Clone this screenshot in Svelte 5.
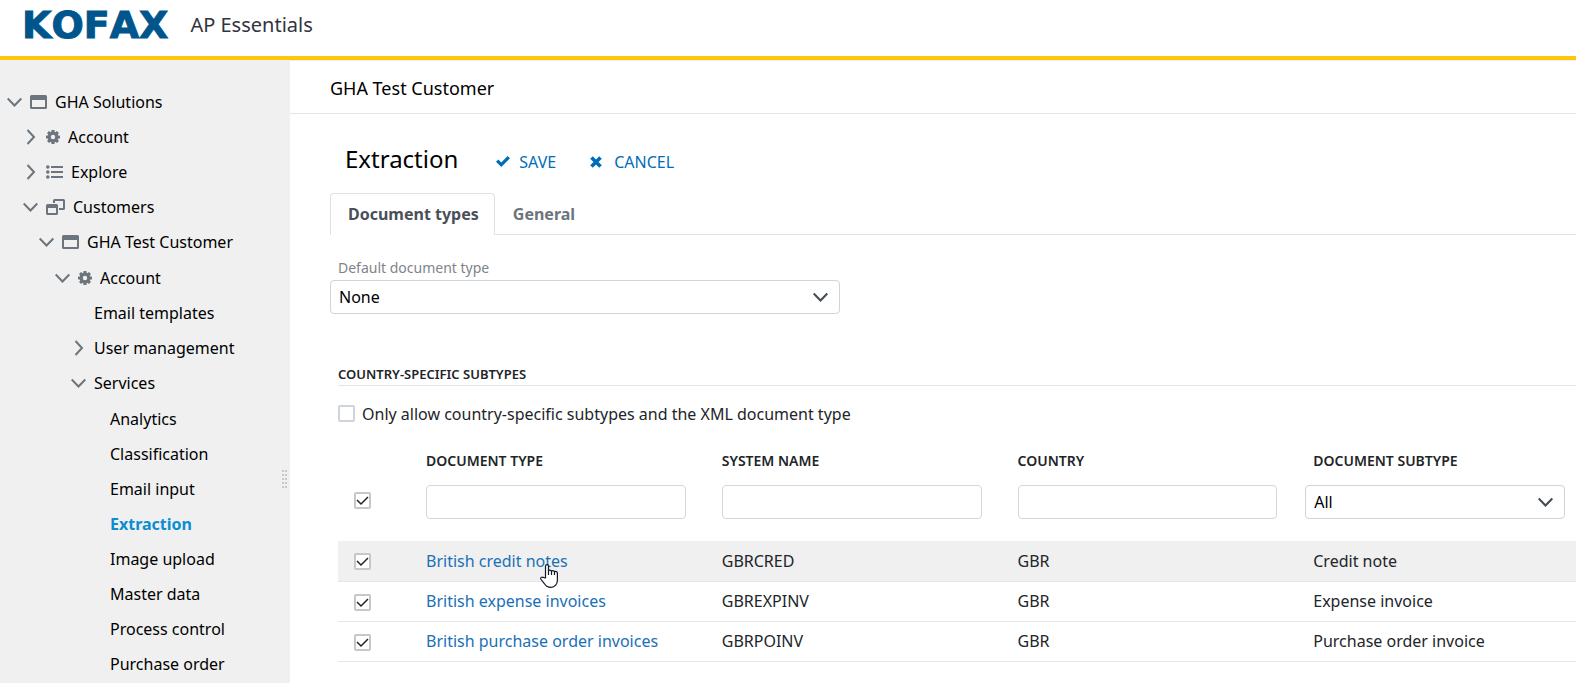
<script>
  const tree = [
    {
      label: 'GHA Solutions', icon: 'window', open: true, children: [
        { label: 'Account', icon: 'gear', open: false },
        { label: 'Explore', icon: 'list', open: false },
        {
          label: 'Customers', icon: 'windows', open: true, children: [
            {
              label: 'GHA Test Customer', icon: 'window', open: true, children: [
                {
                  label: 'Account', icon: 'gear', open: true, children: [
                    { label: 'Email templates' },
                    { label: 'User management', open: false },
                    {
                      label: 'Services', open: true, children: [
                        { label: 'Analytics' },
                        { label: 'Classification' },
                        { label: 'Email input' },
                        { label: 'Extraction', current: true },
                        { label: 'Image upload' },
                        { label: 'Master data' },
                        { label: 'Process control' },
                        { label: 'Purchase order' }
                      ]
                    }
                  ]
                }
              ]
            }
          ]
        }
      ]
    }
  ];

  const rows = $state([
    { type: 'British credit notes', name: 'GBRCRED', country: 'GBR', subtype: 'Credit note', checked: true, active: true },
    { type: 'British expense invoices', name: 'GBREXPINV', country: 'GBR', subtype: 'Expense invoice', checked: true },
    { type: 'British purchase order invoices', name: 'GBRPOINV', country: 'GBR', subtype: 'Purchase order invoice', checked: true }
  ]);
</script>

{#snippet icon(name)}
  {#if name === 'window'}
    <svg width="17" height="15" viewBox="0 0 17 15" aria-hidden="true">
      <path fill="currentColor" fill-rule="evenodd" d="M1.500 0h14A1.500 1.500 0 0 1 17 1.500v11a1.500 1.500 0 0 1-1.500 1.500h-14A1.500 1.500 0 0 1 0 12.500v-11A1.500 1.500 0 0 1 1.500 0zM2 5v7h13V5z" />
    </svg>
  {:else if name === 'gear'}
    <svg width="14" height="15" viewBox="0 0 14 15" aria-hidden="true">
      <g fill="currentColor">
        {#each [0, 45, 90, 135, 180, 225, 270, 315] as angle}
          <rect x="5.400" y="0" width="3.200" height="3.500" rx="0.600" transform="rotate({angle} 7 7)" />
        {/each}
      </g>
      <circle cx="7" cy="7" r="3.800" fill="none" stroke="currentColor" stroke-width="3.200" />
    </svg>
  {:else if name === 'list'}
    <svg width="17" height="15" viewBox="0 0 17 15" aria-hidden="true">
      <g fill="currentColor">
        <circle cx="1.800" cy="2" r="1.800" /><circle cx="1.800" cy="7" r="1.800" /><circle cx="1.800" cy="12" r="1.800" />
        <rect x="5" y="1" width="12" height="2" /><rect x="5" y="6" width="12" height="2" /><rect x="5" y="11" width="12" height="2" />
      </g>
    </svg>
  {:else}
    <svg width="19" height="17" viewBox="0 0 19 17" aria-hidden="true">
      <path fill="currentColor" fill-rule="evenodd" d="M8.500 0h9A1.500 1.500 0 0 1 19 1.500v8a1.500 1.500 0 0 1-1.500 1.500H13V9h4V2H9v2H7V1.500A1.500 1.500 0 0 1 8.500 0zM1.500 5h9A1.500 1.500 0 0 1 12 6.500v8a1.500 1.500 0 0 1-1.500 1.500h-9A1.500 1.500 0 0 1 0 14.500v-8A1.500 1.500 0 0 1 1.500 5zM2 9v5h8V9z" />
    </svg>
  {/if}
{/snippet}

{#snippet chevron(open)}
  <svg width="16" height="16" viewBox="0 0 16 16" aria-hidden="true">
    <path fill="none" stroke="currentColor" stroke-width="2" d={open ? 'M0.700 4.500l6.800 7 6.800-7' : 'M4.500 1l6.500 7-6.500 7'} />
  </svg>
{/snippet}

{#snippet branch(items, depth)}
  <ul class:spaced={depth === 3 || depth === 5}>
    {#each items as item}
      <li>
        <div class="node">
          <span class="toggle">{#if item.open !== undefined}{@render chevron(item.open)}{/if}</span>
          {#if item.icon}<span class="glyph">{@render icon(item.icon)}</span>{/if}
          <a href="#top" class:current={item.current}>{item.label}</a>
        </div>
        {#if item.children}{@render branch(item.children, depth + 1)}{/if}
      </li>
    {/each}
  </ul>
{/snippet}

<div class="page">
  <header class="top">
    <span class="brand">KOFAX</span>
    <span class="product">AP Essentials</span>
  </header>

  <div class="body">
    <nav class="sidebar" aria-label="Configuration">
      <div class="tree">{@render branch(tree, 0)}</div>
      <div class="grip">{#each Array(10) as _}<i></i>{/each}</div>
    </nav>

    <main>
      <div class="crumb">GHA Test Customer</div>

      <section class="content">
        <div class="heading">
          <h1>Extraction</h1>
          <button type="button" class="action save">
            <svg width="14" height="11" viewBox="0 0 14 11" aria-hidden="true"><path fill="currentColor" d="M0 5.700L2.300 3.400l3 3L11.600 0 14 2.300 5.300 11z" /></svg>
            SAVE
          </button>
          <button type="button" class="action cancel">
            <svg width="12" height="12" viewBox="0 0 12 12" aria-hidden="true"><path fill="none" stroke="currentColor" stroke-width="3.600" d="M1.500 1.500l9 9M10.500 1.500l-9 9" /></svg>
            CANCEL
          </button>
        </div>

        <div class="tabs" role="tablist">
          <button type="button" role="tab" class="tab selected" aria-selected="true">Document types</button>
          <button type="button" role="tab" class="tab" aria-selected="false">General</button>
        </div>

        <div class="field">
          <label for="default-type">Default document type</label>
          <div class="select">
            <select id="default-type"><option>None</option></select>
            {@render chevron(true)}
          </div>
        </div>

        <div class="subtypes">
          <h2>COUNTRY-SPECIFIC SUBTYPES</h2>
          <label class="only"><input type="checkbox" /> Only allow country-specific subtypes and the XML document type</label>

          <table>
            <colgroup><col class="pick" /><col /><col /><col /><col /></colgroup>
            <thead>
              <tr class="titles">
                <td></td>
                <th scope="col">DOCUMENT TYPE</th>
                <th scope="col">SYSTEM NAME</th>
                <th scope="col">COUNTRY</th>
                <th scope="col">DOCUMENT SUBTYPE</th>
              </tr>
              <tr class="filters">
                <td><input type="checkbox" checked aria-label="Select all" /></td>
                <td><input type="text" aria-label="Document type" /></td>
                <td><input type="text" aria-label="System name" /></td>
                <td><input type="text" aria-label="Country" /></td>
                <td class="choice">
                  <div class="select">
                    <select aria-label="Document subtype"><option>All</option></select>
                    {@render chevron(true)}
                  </div>
                </td>
              </tr>
            </thead>
            <tbody>
              {#each rows as row}
                <tr class:active={row.active}>
                  <td><input type="checkbox" bind:checked={row.checked} aria-label={row.type} /></td>
                  <td>
                    <span class="target">
                      <a href="#top">{row.type}</a>
                      {#if row.active}
                        <svg class="pointer" width="18" height="24" viewBox="0 0 18 24" aria-hidden="true">
                          <path fill="#fff" stroke="#15152a" stroke-width="1.200" stroke-linejoin="round" d="M5.500 14V2.200a1.500 1.500 0 0 1 3 0v4.300q1.500-1 3 .5 1.500-1 3 .6 2.500-.6 2.900 1.400V16c0 4-2.400 7.400-6.400 7.400-3.500 0-5.200-1.400-6.500-3.600L.8 15c-.6-1.300 1-2.500 2.200-1.600z" />
                          <path fill="none" stroke="#15152a" stroke-width="1.200" d="M8.500 6v5M11.500 7v4M14.500 7.500V11" />
                        </svg>
                      {/if}
                    </span>
                  </td>
                  <td>{row.name}</td>
                  <td>{row.country}</td>
                  <td>{row.subtype}</td>
                </tr>
              {/each}
            </tbody>
          </table>
        </div>
      </section>
    </main>
  </div>
</div>

<style>
  :global(body) { margin: 0; overflow: hidden; }
  * { box-sizing: border-box; }
  .page {
    display: flex;
    flex-direction: column;
    height: 100vh;
    overflow: hidden;
    background: #fff;
    color: #212529;
    font: 16px/24px "Noto Sans", sans-serif;
  }
  svg { display: block; flex: none; }
  a { text-decoration: none; }
  button, input, select { font: inherit; margin: 0; }

  .top {
    display: flex;
    align-items: center;
    gap: 22px;
    flex: none;
    height: 60px;
    padding: 0 22px 6px;
    border-bottom: 4px solid #ffc60b;
  }
  .brand {
    color: #00558c;
    font: 700 38px/40px "DejaVu Sans", sans-serif;
    font-kerning: none;
    -webkit-text-stroke: 1px #00558c;
  }
  .product { color: #333340; font-size: 20px; line-height: 28px; }

  .body { display: flex; flex: 1; min-height: 0; }
  .sidebar {
    position: relative;
    flex: none;
    width: 290px;
    padding-top: 24px;
    overflow: hidden;
    background: #f0f0f0;
  }
  .tree { padding-left: 7px; }
  .tree ul { margin: 0; padding: 0; list-style: none; }
  .tree ul ul { padding-left: 16px; }
  .tree ul.spaced { padding-top: 1px; }
  .node { display: flex; align-items: center; height: 35px; white-space: nowrap; }
  .node a { color: #000; }
  .node a.current { color: #0a8ed0; font-weight: 700; }
  .toggle { width: 16px; margin-right: 7px; color: #6c757d; }
  .glyph { margin-right: 8px; padding-top: 2px; color: #6c757d; }
  .grip {
    position: absolute;
    right: 3px;
    top: 410px;
    display: grid;
    grid-template-columns: 2px 2px;
    gap: 2px 1px;
  }
  .grip i { width: 2px; height: 2px; background: #c8c8c8; }

  main { flex: 1; min-width: 0; overflow: hidden; border-top: 1px solid #ededed; }
  .crumb {
    height: 53px;
    padding: 15px 40px 13px;
    border-bottom: 1px solid #e4e4e6;
    color: #000;
    font-size: 18px;
  }
  .content { padding-left: 40px; }
  .heading { display: flex; align-items: center; padding: 29px 14px 19px 15px; }
  h1 { margin: 0; color: #000; font-size: 24px; line-height: 32px; font-weight: 400; }
  .action {
    display: flex;
    align-items: center;
    margin-top: 5px;
    padding: 0;
    border: 0;
    background: none;
    color: #006dba;
  }
  .save { gap: 9px; margin-left: 38px; }
  .cancel { gap: 12px; margin-left: 34px; }

  .tabs { display: flex; border-bottom: 1px solid #dee2e6; }
  .tab {
    height: 42px;
    padding: 0 15px 0 17px;
    margin: -1px 0;
    border: 1px solid transparent;
    border-radius: 4px 4px 0 0;
    background: none;
    color: #6c757d;
    font-weight: 700;
  }
  .selected { border-color: #dee2e6; border-bottom-color: #fff; background: #fff; color: #495057; }

  .field { padding-top: 22px; width: 510px; }
  .field label { display: block; padding: 0 8px 1px; color: #808488; font-size: 14px; line-height: 22px; }
  .select { position: relative; color: #444b52; }
  .select svg { position: absolute; right: 11px; top: 9px; pointer-events: none; }
  select, input[type='text'] {
    display: block;
    width: 100%;
    height: 34px;
    padding: 0 8px;
    border: 1px solid #ced4da;
    border-radius: 4px;
    background: #fff;
    color: #000;
    appearance: none;
  }
  input[type='text'] { border-color: #d4d6d8; }

  .subtypes { padding: 48px 0 0 8px; }
  h2 {
    margin: 0;
    padding-top: 2px;
    border-bottom: 1px solid #e2e4e6;
    font-size: 13px;
    line-height: 21px;
    font-weight: 600;
  }
  .only { display: flex; align-items: center; gap: 7px; padding: 16px 0; }
  .only input { margin-bottom: 2px; }
  input[type='checkbox'] {
    display: block;
    flex: none;
    width: 17px;
    height: 17px;
    border: 2px solid #ced4da;
    border-radius: 2px;
    background: #fff center / 13px 13px no-repeat;
    appearance: none;
  }
  input[type='checkbox']:checked {
    border-color: #c4c8c8;
    background-image: url("data:image/svg+xml,%3Csvg xmlns='http://www.w3.org/2000/svg' viewBox='0 0 13 13'%3E%3Cpath d='M1 6l4 4 7-7' fill='none' stroke='%23222' stroke-width='1.500'/%3E%3C/svg%3E");
  }

  table { width: calc(100% + 25px); table-layout: fixed; border-collapse: collapse; }
  .pick { width: 80px; }
  th, td { padding: 0 28px 0 8px; text-align: left; white-space: nowrap; }
  td:first-child { padding: 2px 0 0 16px; }
  th { height: 39px; padding-bottom: 1px; font-size: 14px; font-weight: 600; }
  .filters td { height: 60px; padding-top: 4px; padding-bottom: 22px; }
  .filters td:first-child { padding: 0 0 22px 16px; }
  .filters .choice { padding-left: 0; padding-right: 36px; }
  tbody tr { height: 40px; border-bottom: 1px solid #e4e6e8; }
  tbody a { color: #1a70b8; }
  .active { background: #f0f0f0; }
  .target { position: relative; display: inline-block; }
  .pointer { position: absolute; left: 114px; top: 15px; }
</style>
